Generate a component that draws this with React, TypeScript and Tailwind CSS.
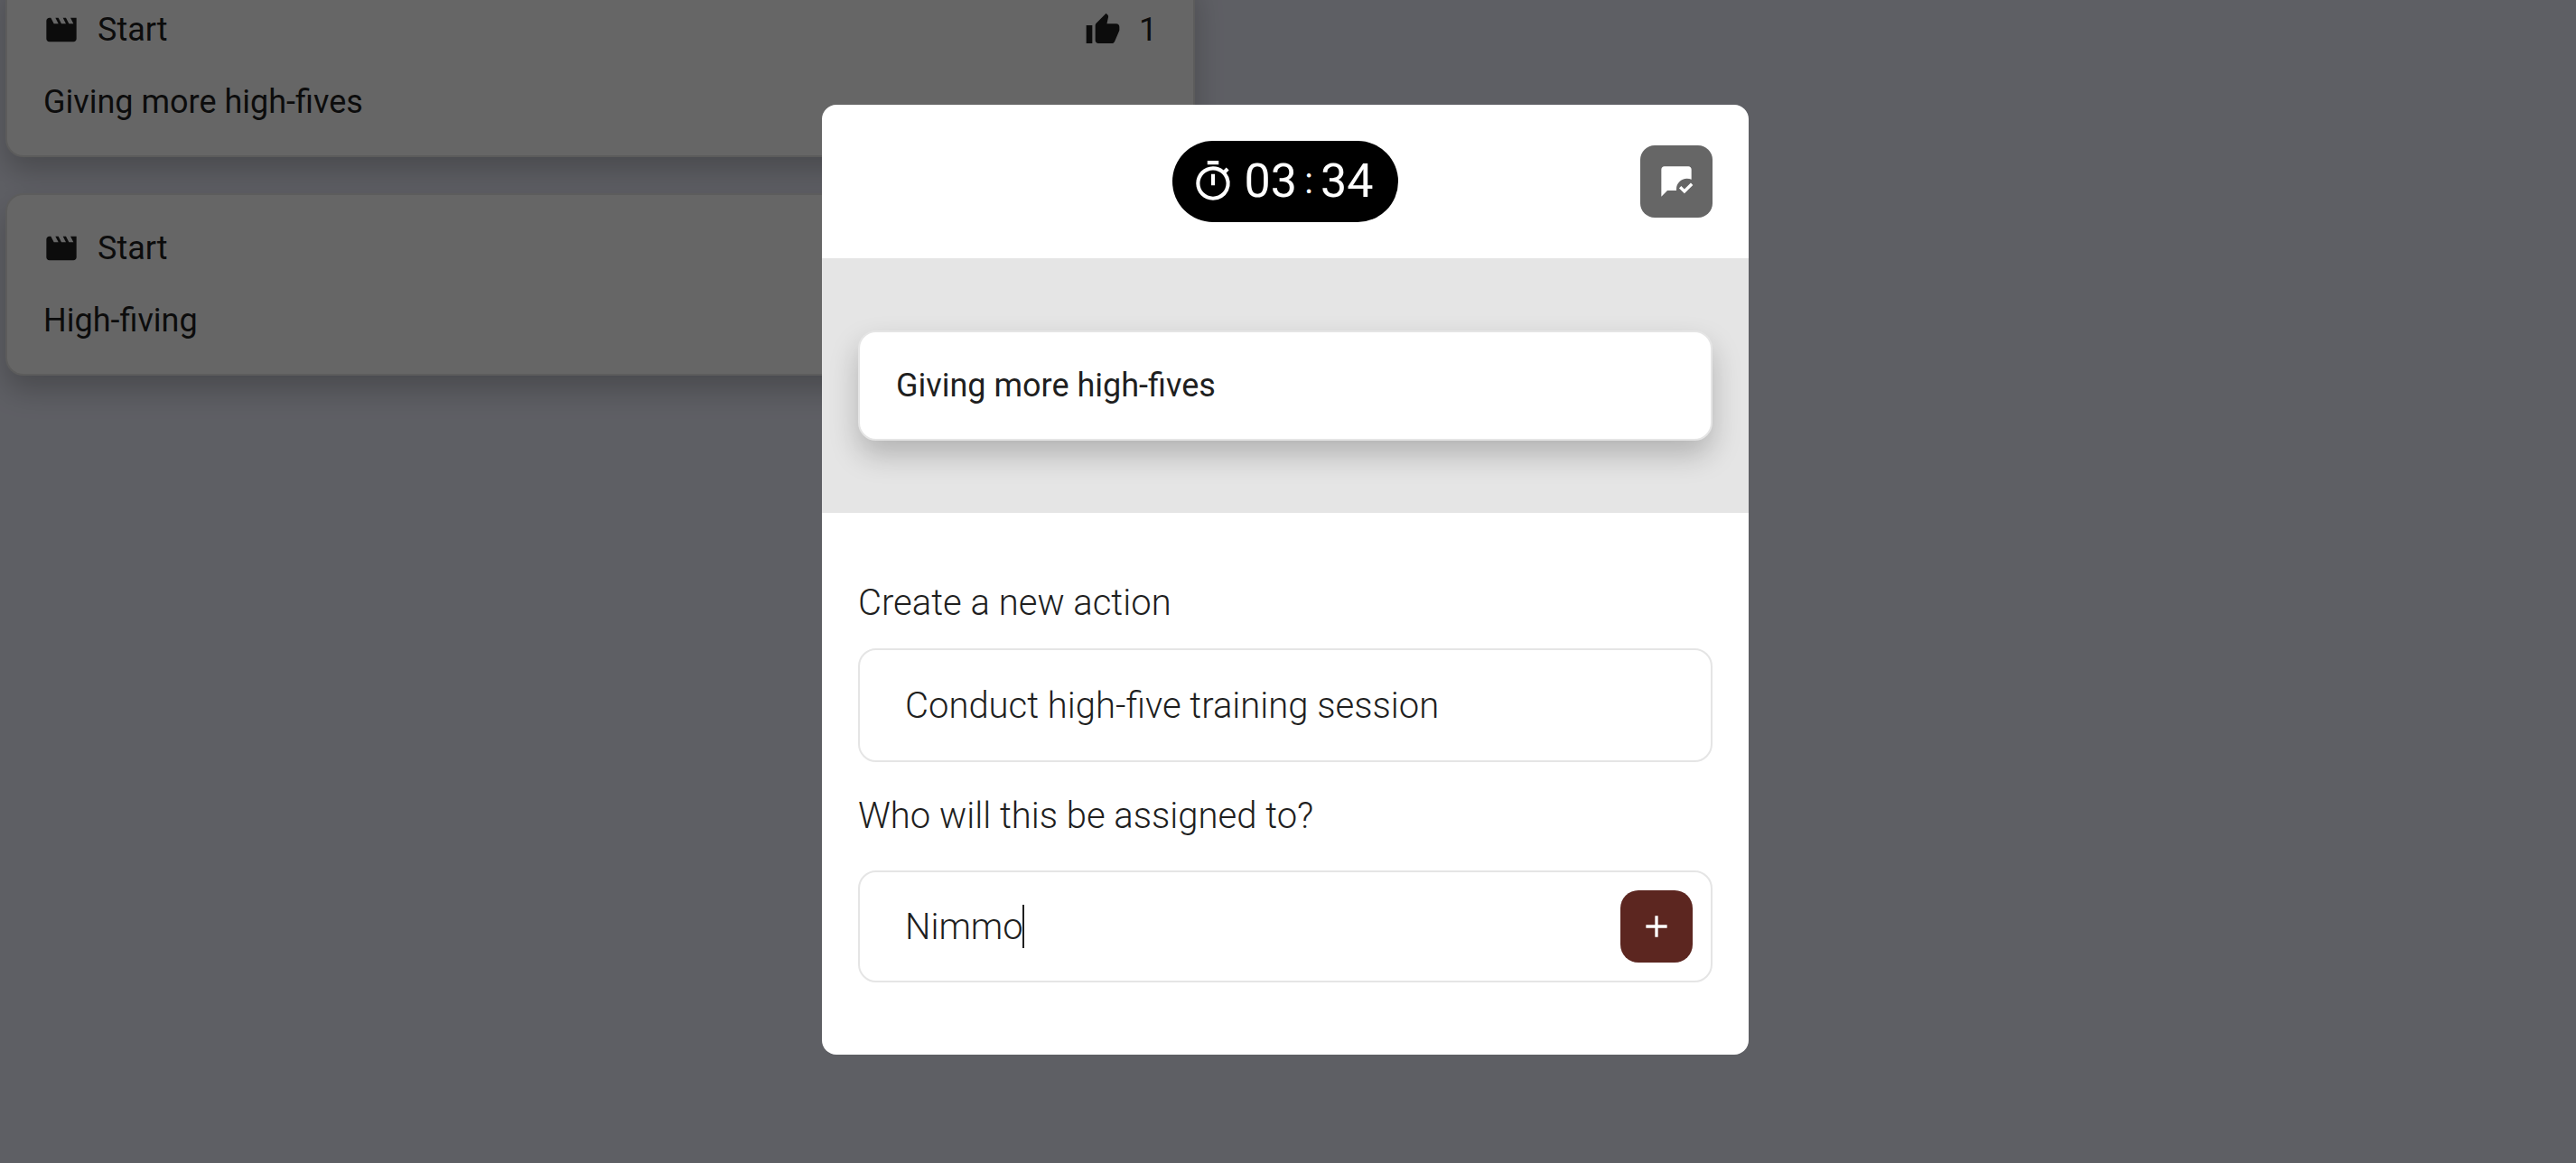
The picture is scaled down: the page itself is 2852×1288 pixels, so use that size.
import { useState } from "react";
import { MdAdd, MdMovie, MdOutlineTimer, MdThumbUp } from "react-icons/md";

const topics = [
  { category: "Start", text: "Giving more high-fives", votes: 1 },
  { category: "Start", text: "High-fiving", votes: 1 },
];

const cardClass =
  "rounded-[20px] border-2 border-[#e5e5e5] bg-white p-10 text-[36px] leading-[38px] shadow-[0_16px_32px_rgba(0,0,0,0.22)]";

const fieldClass =
  "w-full rounded-[20px] border-2 border-[#e5e5e5] bg-white px-[50px] text-[40px] leading-[60px] font-light outline-none";

function ChatReadIcon() {
  return (
    <svg viewBox="0 0 24 24" className="size-10" fill="currentColor" aria-hidden="true">
      <path d="M12 18H6l-4 4V4c0-1.1.9-2 2-2h16c1.1 0 2 .9 2 2v6.68c-.91-.43-1.92-.68-3-.68-3.87 0-7 3.13-7 7z" />
      <path d="M17.34 20l-3.54-3.54 1.41-1.41 2.12 2.12 4.24-4.24L23 14.34z" />
    </svg>
  );
}

export default function App() {
  const [action, setAction] = useState("Conduct high-five training session");
  const [assignee, setAssignee] = useState("Nimmo");

  return (
    <div className="relative min-h-screen overflow-hidden bg-[#ebedfa] font-['Roboto',sans-serif] text-[#1f1f1f]">
      <main className="-mt-7 flex w-[46.4%] flex-col gap-10 pl-1.5">
        {topics.map((topic) => (
          <article key={topic.text} className={cardClass}>
            <div className="mb-[42px] flex items-center justify-between">
              <div className="flex items-center gap-5">
                <MdMovie className="-my-px size-10" aria-hidden="true" />
                <span>{topic.category}</span>
              </div>
              <div className="flex items-center gap-5">
                <MdThumbUp className="-my-px size-10" aria-hidden="true" />
                <span>{topic.votes}</span>
              </div>
            </div>
            <p>{topic.text}</p>
          </article>
        ))}
      </main>

      <div className="absolute inset-0 flex items-center justify-center bg-black/60 pr-1.5 pb-1">
        <section
          role="dialog"
          aria-modal="true"
          aria-label="Action items"
          className="w-full max-w-[1026px] overflow-hidden rounded-2xl bg-white"
        >
          <header className="grid grid-cols-[1fr_auto_1fr] items-center p-10">
            <div className="col-start-2 flex h-[90px] items-center rounded-full bg-black pr-7 pl-5 text-[52px] leading-[60px] text-white">
              <MdOutlineTimer className="mr-2.5 size-[50px]" aria-hidden="true" />
              <span>03</span>
              <span className="w-[26px] text-center text-[40px]">:</span>
              <span>34</span>
            </div>
            <button
              type="button"
              aria-label="Mark as discussed"
              className="flex size-20 items-center justify-center justify-self-end rounded-2xl bg-[#666666] text-white"
            >
              <ChatReadIcon />
            </button>
          </header>

          <div className="bg-[#e5e5e5] px-10 py-20">
            <p className={cardClass}>Giving more high-fives</p>
          </div>

          <form className="flex flex-col px-10 pt-[70px] pb-20" onSubmit={(e) => e.preventDefault()}>
            <label htmlFor="action" className="mb-5 text-[40px] leading-[60px] font-light">
              Create a new action
            </label>
            <input
              id="action"
              className={`${fieldClass} h-[126px]`}
              value={action}
              onChange={(e) => setAction(e.target.value)}
            />
            <label htmlFor="assignee" className="my-[30px] text-[40px] leading-[60px] font-light">
              Who will this be assigned to?
            </label>
            <div className="relative">
              <input
                id="assignee"
                className={`${fieldClass} block h-[124px]`}
                value={assignee}
                onChange={(e) => setAssignee(e.target.value)}
              />
              <span className="absolute top-[38px] left-[182px] h-12 w-0.5 bg-[#1f1f1f]" aria-hidden="true" />
              <button
                type="submit"
                aria-label="Add action"
                className="absolute top-[22px] right-[22px] flex size-20 items-center justify-center rounded-[20px] bg-[#5c2620] text-white"
              >
                <MdAdd className="size-10" aria-hidden="true" />
              </button>
            </div>
          </form>
        </section>
      </div>
    </div>
  );
}
